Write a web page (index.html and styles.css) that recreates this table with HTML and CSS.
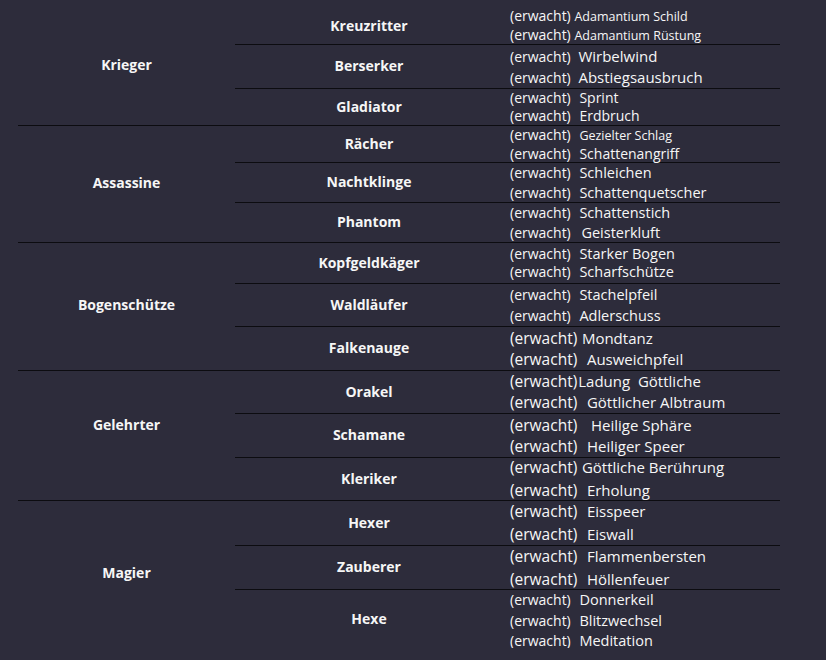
FILE: index.html
```html
<!DOCTYPE html>
<html lang="de">
<head>
<meta charset="utf-8">
<title>Klassen</title>
<link rel="stylesheet" href="styles.css">
</head>
<body>
<div class="grid">
  <!-- Krieger -->
  <div class="cls span3">Krieger</div>
  <div class="sub">Kreuzritter</div>
  <div class="sk lh18"><div><span class="aw">(erwacht)</span> <span class="n125">Adamantium Schild</span></div><div><span class="aw">(erwacht)</span> <span class="n125">Adamantium Rüstung</span></div></div>
  <div class="sub">Berserker</div>
  <div class="sk lh21"><div><span class="aw">(erwacht)</span> <span class="n15 g4">Wirbelwind</span></div><div><span class="aw">(erwacht)</span> <span class="n15 g4">Abstiegsausbruch</span></div></div>
  <div class="sub end">Gladiator</div>
  <div class="sk lh18 end"><div><span class="aw">(erwacht)</span> <span class="n14 g5">Sprint</span></div><div><span class="aw">(erwacht)</span> <span class="n14 g5">Erdbruch</span></div></div>

  <!-- Assassine -->
  <div class="cls span3">Assassine</div>
  <div class="sub">Rächer</div>
  <div class="sk lh18"><div><span class="aw">(erwacht)</span> <span class="n125 g5">Gezielter Schlag</span></div><div><span class="aw">(erwacht)</span> <span class="n14 g5">Schattenangriff</span></div></div>
  <div class="sub">Nachtklinge</div>
  <div class="sk lh20"><div><span class="aw">(erwacht)</span> <span class="n145 g5">Schleichen</span></div><div><span class="aw">(erwacht)</span> <span class="n145 g5">Schattenquetscher</span></div></div>
  <div class="sub end">Phantom</div>
  <div class="sk lh20 end"><div><span class="aw">(erwacht)</span> <span class="n145 g5">Schattenstich</span></div><div><span class="aw">(erwacht)</span> <span class="n145 g7">Geisterkluft</span></div></div>

  <!-- Bogenschütze -->
  <div class="cls span3">Bogenschütze</div>
  <div class="sub">Kopfgeldkäger</div>
  <div class="sk lh18"><div><span class="aw">(erwacht)</span> <span class="n145 g5">Starker Bogen</span></div><div><span class="aw">(erwacht)</span> <span class="n145 g5">Scharfschütze</span></div></div>
  <div class="sub">Waldläufer</div>
  <div class="sk lh21"><div><span class="aw">(erwacht)</span> <span class="n145 g5">Stachelpfeil</span></div><div><span class="aw">(erwacht)</span> <span class="n145 g5">Adlerschuss</span></div></div>
  <div class="sub end">Falkenauge</div>
  <div class="sk lh21 big end"><div><span class="aw">(erwacht)</span> <span class="n15 g1">Mondtanz</span></div><div><span class="aw">(erwacht)</span> <span class="n15 g6">Ausweichpfeil</span></div></div>

  <!-- Gelehrter -->
  <div class="cls span3 up">Gelehrter</div>
  <div class="sub">Orakel</div>
  <div class="sk lh21 big"><div><span class="aw">(erwacht)</span><span class="n15 g1">Ladung&nbsp; Göttliche</span></div><div><span class="aw">(erwacht)</span> <span class="n15 g6">Göttlicher Albtraum</span></div></div>
  <div class="sub">Schamane</div>
  <div class="sk lh21 big"><div><span class="aw">(erwacht)</span> <span class="n15 g10">Heilige Sphäre</span></div><div><span class="aw">(erwacht)</span> <span class="n15 g6">Heiliger Speer</span></div></div>
  <div class="sub end">Kleriker</div>
  <div class="sk lh22 big end"><div><span class="aw">(erwacht)</span> <span class="n15 g1">Göttliche Berührung</span></div><div><span class="aw">(erwacht)</span> <span class="n15 g6">Erholung</span></div></div>

  <!-- Magier -->
  <div class="cls span3 last">Magier</div>
  <div class="sub">Hexer</div>
  <div class="sk lh22 big"><div><span class="aw">(erwacht)</span> <span class="n15 g6">Eisspeer</span></div><div><span class="aw">(erwacht)</span> <span class="n15 g6">Eiswall</span></div></div>
  <div class="sub">Zauberer</div>
  <div class="sk lh22 big"><div><span class="aw">(erwacht)</span> <span class="n15 g6">Flammenbersten</span></div><div><span class="aw">(erwacht)</span> <span class="n15 g6">Höllenfeuer</span></div></div>
  <div class="sub last">Hexe</div>
  <div class="sk last"><div class="l21"><span class="aw">(erwacht)</span> <span class="n145 g5">Donnerkeil</span></div><div class="l21"><span class="aw">(erwacht)</span> <span class="n145 g5">Blitzwechsel</span></div><div class="l19"><span class="aw">(erwacht)</span> <span class="n145 g5">Meditation</span></div></div>
</div>
</body>
</html>
```
FILE: styles.css
```css
html, body {
  margin: 0;
  padding: 0;
  background: #2d2c3b;
}
body {
  padding: 8px 0 0 18px;
  font-family: "Open Sans", "Noto Sans", sans-serif;
  color: #f6f6f6;
}
.grid {
  display: grid;
  grid-template-columns: 217px 268px 277px;
  grid-template-rows: 37px 44px 37px 37px 40px 40px 41px 43px 44px 43px 44px 43px 45px 44px 58px;
}
.grid > div {
  box-sizing: border-box;
  border-bottom: 1px solid #0c0c10;
}
.grid > .last {
  border-bottom: none;
}
.cls, .sub {
  display: flex;
  align-items: center;
  justify-content: center;
  font-weight: 700;
  font-size: 14px;
}
.sub {
  padding-bottom: 2px;
}
.cls {
  padding-bottom: 4px;
}
.span3 {
  grid-row: span 3;
}
.cls.up {
  padding-bottom: 22px;
}
.sk {
  display: flex;
  flex-direction: column;
  justify-content: center;
  padding-left: 7px;
  font-size: 14px;
  white-space: nowrap;
}
.lh18 > div { line-height: 18px; }
.lh20 > div { line-height: 20px; }
.lh21 > div { line-height: 21px; }
.lh22 > div { line-height: 22px; }
.l21 { line-height: 21px; }
.l19 { line-height: 19px; }
.aw { font-size: 14px; }
.big .aw { font-size: 15.5px; }
.n125 { font-size: 12.5px; }
.n14 { font-size: 14px; }
.n145 { font-size: 14.5px; }
.n15 { font-size: 15px; }
.g1 { margin-left: 1px; }
.g4 { margin-left: 4px; }
.g5 { margin-left: 5px; }
.g6 { margin-left: 6px; }
.g7 { margin-left: 7px; }
.g10 { margin-left: 10px; }
```
